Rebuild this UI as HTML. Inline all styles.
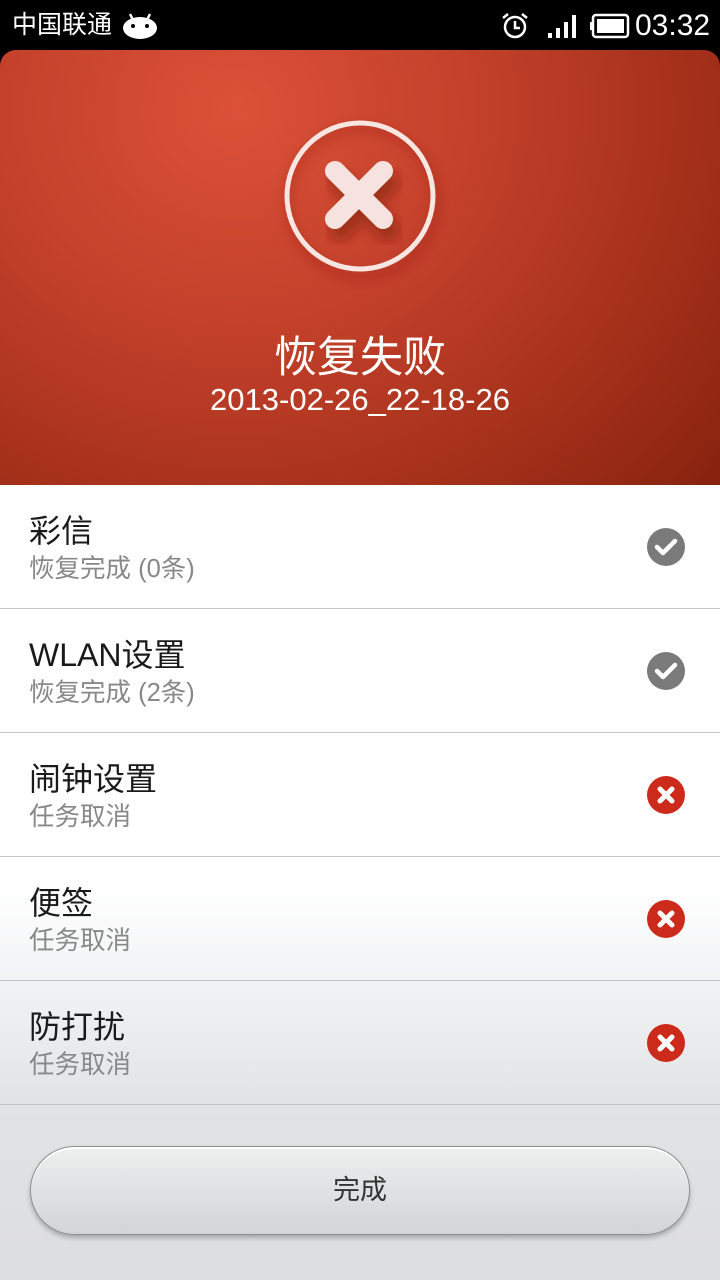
<!DOCTYPE html>
<html><head><meta charset="utf-8"><style>
*{margin:0;padding:0;box-sizing:border-box}
body{width:720px;height:1280px;overflow:hidden;background:#000;font-family:"Liberation Sans","Noto Sans CJK SC",sans-serif;position:relative}
.sb{position:absolute;top:0;left:0;width:720px;height:50px;background:#000;color:#fff}
.hdr{position:absolute;top:50px;left:0;width:720px;height:435px;border-radius:16px 16px 0 0;background:radial-gradient(ellipse 620px 560px at 235px 60px,#dc5138 0%,#c2402a 40%,#a8321c 70%,#8a2410 100%)}
.list{position:absolute;top:485px;left:0;width:720px;height:795px;background:linear-gradient(#fff 0,#fff 400px,#eef0f1 520px,#e2e3e5 620px,#dcdde0 795px)}
.row{position:absolute;left:0;width:720px;height:124px;border-bottom:1px solid #c4c4c4}
.t{position:absolute;left:29px;top:28px;font-size:32px;color:#1a1a1a;line-height:36px}
.s{position:absolute;left:29px;top:69px;font-size:25.5px;color:#888;line-height:30px}
.ic{position:absolute;left:647px;top:43px;width:38px;height:38px}
.btn{position:absolute;left:30px;top:1146px;width:660px;height:89px;border-radius:45px;border:1px solid #8e8e8e;background:linear-gradient(#eeefef,#d3d4d6);box-shadow:0 3px 5px rgba(0,0,0,.25), inset 0 2px 0 #fff;text-align:center;line-height:87px;font-size:27px;color:#333}
</style></head><body>
<div class="sb">
<div style="position:absolute;left:12px;top:10px;font-size:25px;line-height:30px">中国联通</div>
<svg style="position:absolute;left:122px;top:11px" width="36" height="28" viewBox="0 0 36 28"><path d="M8 3 L11 9 M28 3 L25 9" stroke="#fff" stroke-width="2.5"/><ellipse cx="18" cy="17" rx="17" ry="11" fill="#fff"/><circle cx="11" cy="15" r="2" fill="#000"/><circle cx="25" cy="15" r="2" fill="#000"/></svg>
<svg style="position:absolute;left:500px;top:11px" width="30" height="30" viewBox="0 0 30 30"><circle cx="15" cy="16" r="10" fill="none" stroke="#fff" stroke-width="2.5"/><path d="M15 10v7h5" stroke="#fff" stroke-width="2.5" fill="none"/><path d="M3 7l5-4M27 7l-5-4" stroke="#fff" stroke-width="2.5"/></svg>
<svg style="position:absolute;left:548px;top:14px" width="30" height="24" viewBox="0 0 30 24"><rect x="0" y="19" width="4" height="5" fill="#fff"/><rect x="8" y="14" width="4" height="10" fill="#fff"/><rect x="16" y="8" width="4" height="16" fill="#fff"/><rect x="24" y="1" width="4" height="23" fill="#fff"/></svg>
<svg style="position:absolute;left:590px;top:13px" width="40" height="26" viewBox="0 0 40 26"><rect x="3" y="2" width="35" height="22" rx="3" fill="none" stroke="#fff" stroke-width="2.5"/><rect x="0" y="9" width="3" height="8" fill="#fff"/><rect x="7" y="6" width="27" height="14" fill="#fff"/></svg>
<div style="position:absolute;left:635px;top:9px;font-size:30px;line-height:34px">03:32</div>
</div>
<div class="hdr">
<svg style="position:absolute;left:270px;top:60px" width="180" height="180" viewBox="0 0 180 180">
<defs><filter id="sh" x="-30%" y="-30%" width="160%" height="160%"><feGaussianBlur stdDeviation="6"/></filter></defs>
<circle cx="92" cy="92" r="74" fill="none" stroke="#7a1a0c" stroke-opacity=".35" stroke-width="6" filter="url(#sh)"/>
<circle cx="90" cy="86" r="73" fill="none" stroke="#f7e6e2" stroke-width="5"/>
<path d="M66 64L114 112M114 64L66 112" stroke="#6a150a" stroke-opacity=".45" stroke-width="22" stroke-linecap="round" filter="url(#sh)" transform="translate(4,8)"/>
<path d="M65 61L113 109M113 61L65 109" stroke="#f6e3df" stroke-width="20" stroke-linecap="round"/>
</svg>
<div style="position:absolute;top:283px;width:720px;text-align:center;color:#fff;font-size:43px;line-height:50px">恢复失败</div>
<div style="position:absolute;top:332px;width:720px;text-align:center;color:#fff;font-size:31px;line-height:36px">2013-02-26_22-18-26</div>
</div>
<div class="list">
<div class="row" style="top:0"><div class="t">彩信</div><div class="s">恢复完成 (0条)</div><svg class="ic" viewBox="0 0 38 38"><circle cx="19" cy="19" r="19" fill="#7a7a7a"/><path d="M10 19l6 6 12-12" stroke="#fff" stroke-width="4.5" fill="none" stroke-linecap="round" stroke-linejoin="round"/></svg></div>
<div class="row" style="top:124px"><div class="t">WLAN设置</div><div class="s">恢复完成 (2条)</div><svg class="ic" viewBox="0 0 38 38"><circle cx="19" cy="19" r="19" fill="#7a7a7a"/><path d="M10 19l6 6 12-12" stroke="#fff" stroke-width="4.5" fill="none" stroke-linecap="round" stroke-linejoin="round"/></svg></div>
<div class="row" style="top:248px"><div class="t">闹钟设置</div><div class="s">任务取消</div><svg class="ic" viewBox="0 0 38 38"><circle cx="19" cy="19" r="19" fill="#cc2a1a"/><path d="M13 13l12 12M25 13l-12 12" stroke="#fff" stroke-width="5" stroke-linecap="round"/></svg></div>
<div class="row" style="top:372px"><div class="t">便签</div><div class="s">任务取消</div><svg class="ic" viewBox="0 0 38 38"><circle cx="19" cy="19" r="19" fill="#cc2a1a"/><path d="M13 13l12 12M25 13l-12 12" stroke="#fff" stroke-width="5" stroke-linecap="round"/></svg></div>
<div class="row" style="top:496px"><div class="t">防打扰</div><div class="s">任务取消</div><svg class="ic" viewBox="0 0 38 38"><circle cx="19" cy="19" r="19" fill="#cc2a1a"/><path d="M13 13l12 12M25 13l-12 12" stroke="#fff" stroke-width="5" stroke-linecap="round"/></svg></div>
</div>
<div class="btn">完成</div>
</body></html>
